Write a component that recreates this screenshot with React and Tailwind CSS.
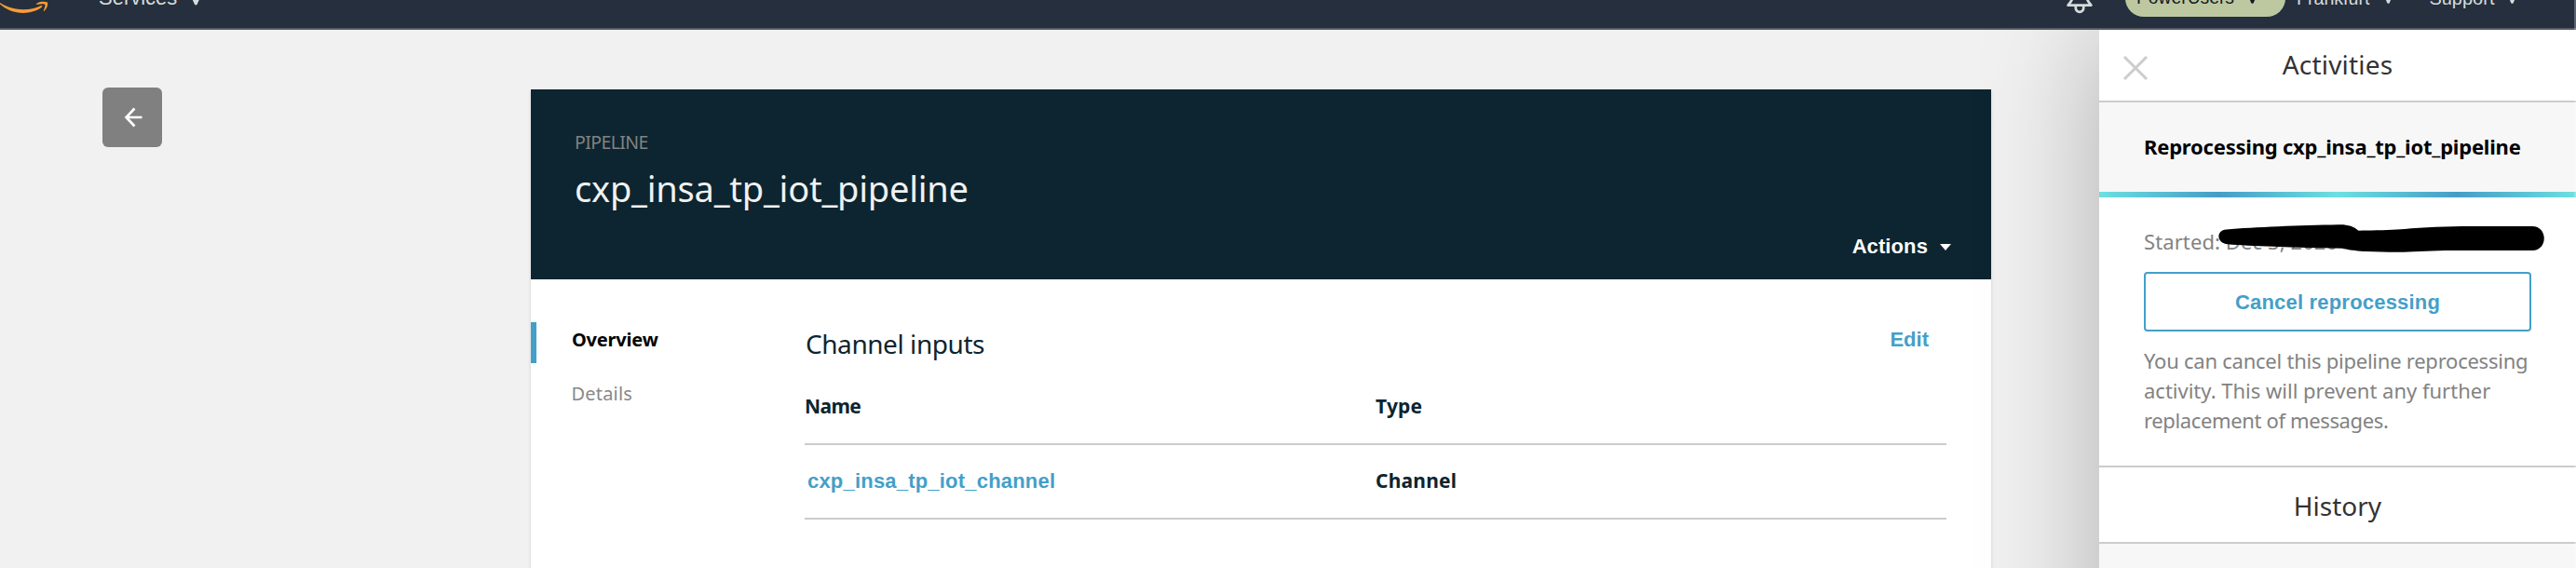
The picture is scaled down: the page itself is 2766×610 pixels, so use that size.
const sans = "font-['Noto_Sans','Open_Sans',sans-serif]";
const arial = "font-['Liberation_Sans',Arial,sans-serif]";

function Caret({ className }) {
  return (
    <svg viewBox="0 0 12 12" className={className} fill="currentColor">
      <path d="M0 0H12L7.2 11Q6 12.6 4.8 11Z" />
    </svg>
  );
}

function Smile() {
  return (
    <svg width="54" height="32" viewBox="0 0 54 32" className="shrink-0" fill="#f79c34">
      <path d="M0 3C8 8 17 10.2 25 10.2C32 10.2 38.5 8.6 43.6 6.2C45.2 5.6 46 6.8 44.8 7.8C39.5 11.8 32 13.9 25 13.9C15.500 13.900 6.500 10.600 0 4.600Z" />
      <path d="M39 4C42 1.600 47.500 1.400 51 2.400C51.800 5.600 50 9.400 47.600 11.700C47 12.200 46.500 11.900 46.800 11.200C47.600 9.200 48.900 6 48.300 4.800C47.500 3.800 43 4.300 39.900 4.700C39 4.800 38.500 4.400 39 4Z" />
    </svg>
  );
}

function TopBar() {
  return (
    <header className={`relative z-20 flex h-8 shrink-0 overflow-hidden border-b-2 border-[#545b64] bg-[#262f3e] text-[#d5dbdb] ${arial}`}>
      <Smile />
      <div className="-mt-[18px] ml-[52px] flex h-8 w-[112px] shrink-0 gap-[13px] text-[22px] leading-8">
        <span>Services</span>
        <Caret className="mt-[9px] h-[15px] w-[15px]" />
      </div>
      <svg width="32" height="16" viewBox="0 0 32 16" className="ml-[1999px] shrink-0" fill="none" stroke="#d5dbdb" strokeWidth="2.800" strokeLinejoin="round">
        <path d="M8.500 -4C8.500 0 6 3 3.600 5.600H28.400C26 3 23.500 0 23.500 -4" />
        <path d="M11.800 6V8.600A4.200 4.200 0 0 0 20.200 8.600V6" />
      </svg>
      <div className="-mt-[46px] ml-[33px] flex h-16 w-[172px] shrink-0 gap-[13px] rounded-[20px] bg-[#bdc8a1] pl-[12px] pt-[28px] text-[19.300px] leading-[32px] text-[#16191f]">
        <span>PowerUsers</span>
        <Caret className="mt-[9px] h-[13px] w-[13px]" />
      </div>
      <div className="-mt-[18px] ml-[12px] flex h-8 gap-[14px] text-[19.600px] leading-8">
        <span>Frankfurt</span>
        <Caret className="mt-[9px] h-[13px] w-[13px]" />
      </div>
      <div className="-mt-[18px] ml-[37px] flex h-8 gap-[13px] text-[20px] leading-8">
        <span>Support</span>
        <Caret className="mt-[9px] h-[13px] w-[13px]" />
      </div>
    </header>
  );
}

function PipelineCard() {
  return (
    <section className="mt-16 ml-[396px] flex h-[700px] w-[1568px] shrink-0 flex-col bg-white shadow-[0_2px_4px_rgba(0,0,0,0.12)]">
      <div className="h-[204px] shrink-0 bg-[#0c2530] pt-[45px] pl-[47px]">
        <div className="text-[19.500px] leading-6 tracking-[-0.600px] text-[#828282]">PIPELINE</div>
        <h1 className="mt-[13px] text-[38px] leading-[48px] tracking-[-0.220px] text-[#f1f1f1]">cxp_insa_tp_iot_pipeline</h1>
        <div className={`mt-[25px] flex items-center justify-end gap-[13px] pr-[43px] text-[22px] leading-7 font-bold text-white ${arial}`}>
          <span className="tracking-[0.100px]">Actions</span>
          <svg width="12" height="7" viewBox="0 0 12 7" fill="currentColor" className="mt-px">
            <path d="M0 0H12L6 7Z" />
          </svg>
        </div>
      </div>
      <div className="flex">
        <nav className="w-[294px] pt-[46px] text-[20px] leading-9">
          <div className="h-11 border-l-6 border-[#449fc8] pt-px pl-[38px] font-bold tracking-[-0.200px] text-black">Overview</div>
          <div className="mt-[15px] pl-[43.500px] tracking-[0.200px] text-[#888888]">Details</div>
        </nav>
        <div className="w-[1226px] pt-[50px] text-[#0c2530]">
          <div className="flex h-[37px] justify-between">
            <h2 className="pt-px pl-px text-[28px] leading-9 tracking-[-0.440px]">Channel inputs</h2>
            <span className={`pt-px pr-[19px] text-[22px] leading-7 font-bold text-[#449fc8] ${arial}`}>Edit</span>
          </div>
          <div className="mt-[35px] flex h-14 border-b-2 border-[#cccccc] text-[21px] leading-7 font-bold">
            <span className="w-[612px] tracking-[-0.600px]">Name</span>
            <span className="pl-px tracking-[0.200px]">Type</span>
          </div>
          <div className="flex h-20 border-b-2 border-[#cccccc] pt-6 leading-7 font-bold">
            <span className={`w-[612px] pt-px pl-[3px] text-[22px] tracking-[0.200px] text-[#449fc8] ${arial}`}>cxp_insa_tp_iot_channel</span>
            <span className="pl-px text-[21px] tracking-[0.200px]">Channel</span>
          </div>
        </div>
      </div>
    </section>
  );
}

function Redaction() {
  return (
    <svg width="352" height="32" viewBox="2381 240 352 32" className="absolute top-[28px] left-[127px]">
      <path d="M2390.500 246.500C2420 244 2470 242 2511 241.300C2521 241 2527 243 2532.500 247.700C2552 247.500 2570 247 2582 246C2600 244 2630 243.200 2652 243H2719C2736 243 2736 269 2719 269H2626C2605 269.300 2590 270.700 2575 270.700C2560 270.700 2548 270.500 2535 269.700C2526 269 2520 268 2515 266.800C2490 266 2465 266 2441 264.700C2420 264 2405 263.500 2392 262.300C2380 261.500 2379 247.500 2390.500 246.500Z" fill="#000" />
    </svg>
  );
}

function ActivitiesPanel() {
  return (
    <aside className="absolute top-0 right-0 z-10 flex h-[900px] w-[512px] flex-col bg-white shadow-[0_0_120px_rgba(0,0,0,0.280)]">
      <div className="relative h-[78px] shrink-0 border-b-2 border-[#cccccc] pt-[19px] text-center">
        <svg width="28" height="28" viewBox="0 0 28 28" className="absolute top-[27px] left-[25px]" stroke="#cccccc" strokeWidth="3">
          <path d="M2 2L26 26M26 2L2 26" />
        </svg>
        <h2 className="text-[28px] leading-9 tracking-[0.200px] text-[#333333]">Activities</h2>
      </div>
      <div className="h-24 shrink-0 bg-[#f7f7f7] pt-[31px] pl-12 text-[22px] leading-8 font-bold tracking-[-0.210px] whitespace-nowrap text-black">
        Reprocessing cxp_insa_tp_iot_pipeline
      </div>
      <div className="h-1.5 shrink-0 bg-[linear-gradient(90deg,#6ce0e0,#449dc7_25%,#6ce0e0_50%,#449dc7_75%,#6ce0e0)]" />
      <div className="relative h-[290px] shrink-0 border-b-2 border-[#cccccc] px-12 pt-[31px] text-[22px] leading-8 whitespace-nowrap text-[#828282]">
        <div className="tracking-[0.100px]">Started: Dec 3, 2020</div>
        <Redaction />
        <button className={`mt-[17px] block h-16 w-[416px] rounded-[4px] border-2 border-[#449fc8] pt-px text-[22px] font-bold tracking-[0.200px] text-[#449fc8] ${arial}`}>Cancel reprocessing</button>
        <p className="mt-[15px]">
          <span className="block tracking-[-0.240px]">You can cancel this pipeline reprocessing</span>
          <span className="block">activity. This will prevent any further</span>
          <span className="block tracking-[-0.360px]">replacement of messages.</span>
        </p>
      </div>
      <h2 className="h-[82px] shrink-0 border-b-2 border-[#cccccc] pt-[23px] text-center text-[28px] leading-9 text-[#333333]">History</h2>
      <div className="flex-1 bg-[#f7f7f7]" />
    </aside>
  );
}

export default function App() {
  return (
    <div className={`relative flex h-[610px] w-[2766px] flex-col overflow-hidden bg-[#f1f1f1] ${sans}`}>
      <TopBar />
      <main className="relative flex flex-1 items-start overflow-hidden">
        <button className="mt-[62px] ml-[110px] flex h-16 w-16 shrink-0 items-center justify-center rounded-[6px] bg-[#808080]">
          <svg width="20" height="22" viewBox="0 0 20 22" fill="none" stroke="#fff" strokeWidth="2.600" className="ml-px">
            <path d="M11.500 1.500L2.500 11L11.500 20.500M2.500 11H19.500" />
          </svg>
        </button>
        <PipelineCard />
        <ActivitiesPanel />
      </main>
      <div className="absolute top-0 right-0 z-30 h-full w-[2px] bg-white/25" />
    </div>
  );
}
